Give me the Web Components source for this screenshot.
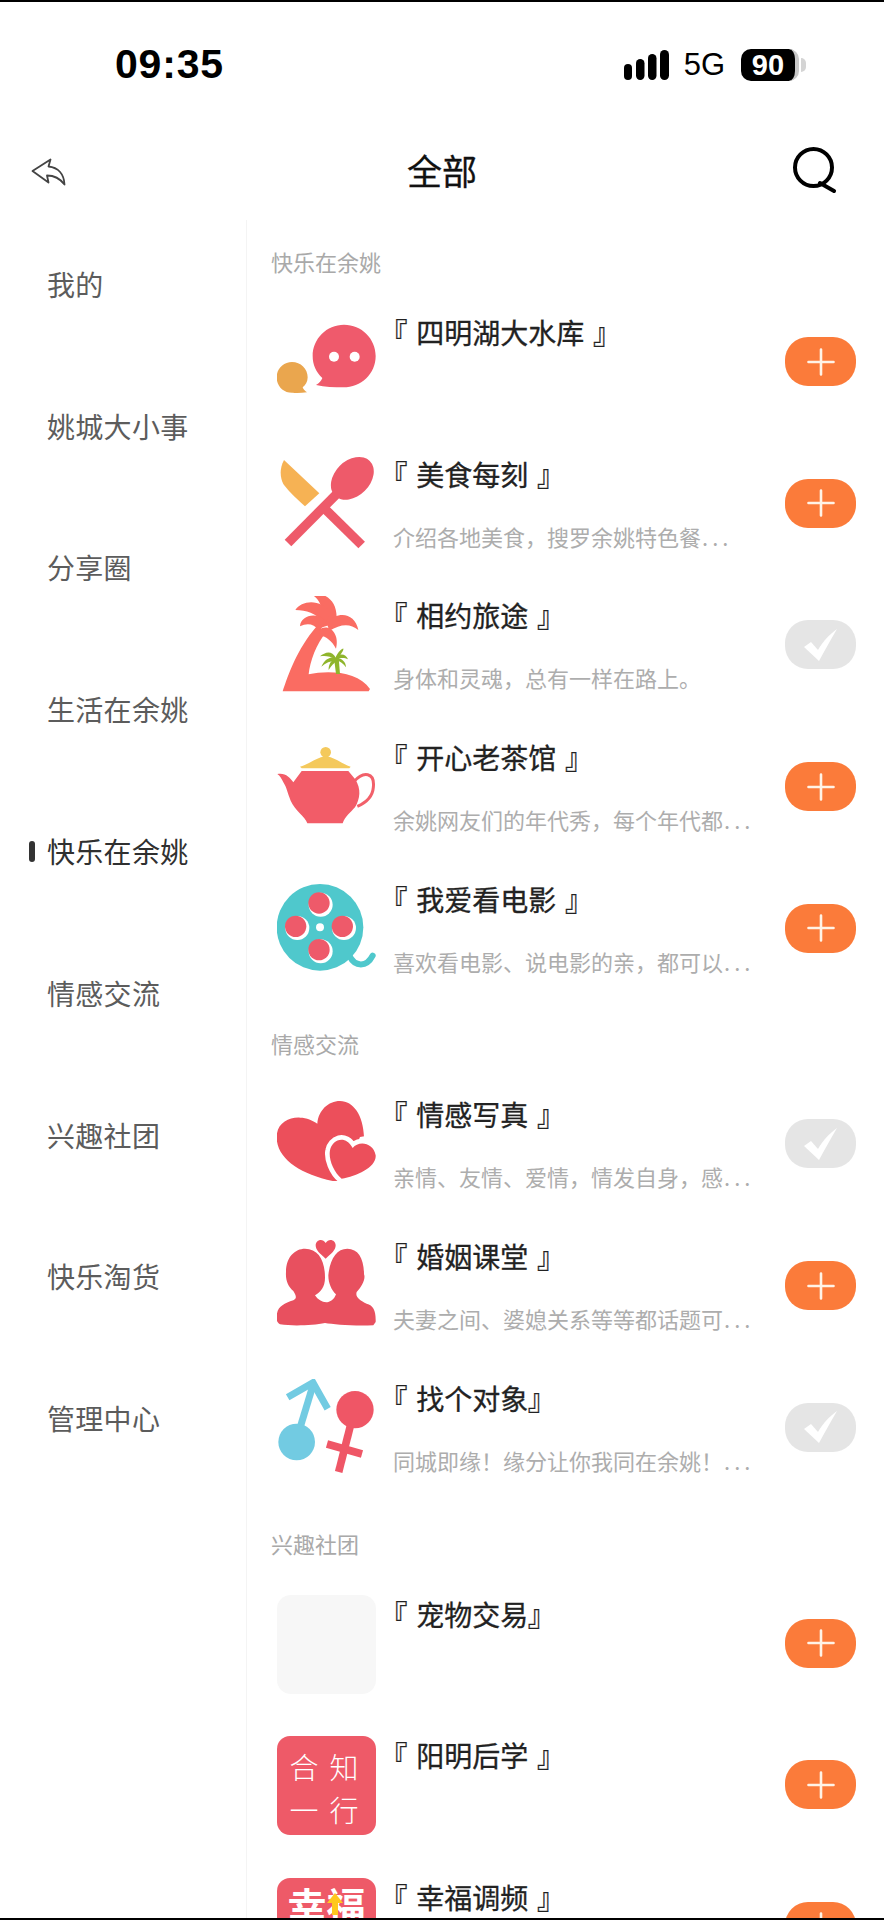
<!DOCTYPE html>
<html lang="zh">
<head>
<meta charset="utf-8">
<title>全部</title>
<style>
  html,body{margin:0;padding:0;background:#fff;}
  body{font-family:"Noto Sans CJK SC","Liberation Sans",sans-serif;}
  .dots{letter-spacing:4px;margin-left:1px;}
</style>
</head>
<body>
<app-shell>
  <status-bar slot="status"></status-bar>
  <top-nav slot="nav">全部</top-nav>
  <side-menu slot="side">
    <menu-item>我的</menu-item>
    <menu-item>姚城大小事</menu-item>
    <menu-item>分享圈</menu-item>
    <menu-item>生活在余姚</menu-item>
    <menu-item active>快乐在余姚</menu-item>
    <menu-item>情感交流</menu-item>
    <menu-item>兴趣社团</menu-item>
    <menu-item>快乐淘货</menu-item>
    <menu-item>管理中心</menu-item>
  </side-menu>

  <forum-section heading="快乐在余姚">
    <forum-row>
      <forum-icon slot="icon" kind="chat"></forum-icon>
      <span slot="title">『 四明湖大水库 』</span>
    </forum-row>
    <forum-row>
      <forum-icon slot="icon" kind="food"></forum-icon>
      <span slot="title">『 美食每刻 』</span>
      <span slot="desc">介绍各地美食，搜罗余姚特色餐<span class="dots">...</span></span>
    </forum-row>
    <forum-row joined>
      <forum-icon slot="icon" kind="palm"></forum-icon>
      <span slot="title">『 相约旅途 』</span>
      <span slot="desc">身体和灵魂，总有一样在路上。</span>
    </forum-row>
    <forum-row>
      <forum-icon slot="icon" kind="teapot"></forum-icon>
      <span slot="title">『 开心老茶馆 』</span>
      <span slot="desc">余姚网友们的年代秀，每个年代都<span class="dots">...</span></span>
    </forum-row>
    <forum-row>
      <forum-icon slot="icon" kind="film"></forum-icon>
      <span slot="title">『 我爱看电影 』</span>
      <span slot="desc">喜欢看电影、说电影的亲，都可以<span class="dots">...</span></span>
    </forum-row>
  </forum-section>

  <forum-section heading="情感交流">
    <forum-row joined>
      <forum-icon slot="icon" kind="hearts"></forum-icon>
      <span slot="title">『 情感写真 』</span>
      <span slot="desc">亲情、友情、爱情，情发自身，感<span class="dots">...</span></span>
    </forum-row>
    <forum-row>
      <forum-icon slot="icon" kind="couple"></forum-icon>
      <span slot="title">『 婚姻课堂 』</span>
      <span slot="desc">夫妻之间、婆媳关系等等都话题可<span class="dots">...</span></span>
    </forum-row>
    <forum-row joined>
      <forum-icon slot="icon" kind="gender"></forum-icon>
      <span slot="title">『 找个对象』</span>
      <span slot="desc">同城即缘！缘分让你我同在余姚！<span class="dots">...</span></span>
    </forum-row>
  </forum-section>

  <forum-section heading="兴趣社团">
    <forum-row>
      <forum-icon slot="icon" kind="blank"></forum-icon>
      <span slot="title">『 宠物交易』</span>
    </forum-row>
    <forum-row>
      <forum-icon slot="icon" kind="seal"></forum-icon>
      <span slot="title">『 阳明后学 』</span>
    </forum-row>
    <forum-row>
      <forum-icon slot="icon" kind="luck"></forum-icon>
      <span slot="title">『 幸福调频 』</span>
    </forum-row>
  </forum-section>
</app-shell>

<script>
class AppShell extends HTMLElement {
  constructor(){
    super();
    this.attachShadow({mode:"open"});
    this.shadowRoot.innerHTML = `
      <style>
        :host{display:flex;flex-direction:column;height:1920px;overflow:hidden;background:#fff;}
        .edge{flex:none;height:2px;background:#000;}
        .body{flex:1;min-height:0;display:grid;grid-template-columns:246px 1fr;overflow:hidden;}
        .list{border-left:1px solid #f4f4f4;padding:19px 0 0 24px;overflow:hidden;}
      </style>
      <div class="edge"></div>
      <slot name="status"></slot>
      <slot name="nav"></slot>
      <div class="body">
        <slot name="side"></slot>
        <div class="list"><slot></slot></div>
      </div>
      <div class="edge"></div>
    `;
  }
}

class StatusBar extends HTMLElement {
  constructor(){
    super();
    this.attachShadow({mode:"open"});
    this.shadowRoot.innerHTML = `
      <style>
        :host{display:flex;flex:none;height:126px;align-items:center;justify-content:space-between;
          padding:0 78px 0 115px;font-family:"Liberation Sans",sans-serif;color:#000;}
        .time{font-size:41px;font-weight:700;letter-spacing:.8px;margin-top:-1px;}
        .right{display:flex;align-items:center;}
        .net{font-size:31px;margin:0 16px 0 15px;}
        .bars{display:block;}
        .batt{display:flex;align-items:center;}
        .cell{width:58px;height:32px;border-radius:10px;box-sizing:border-box;border-right:4px solid #c9c9c9;
          background:#000;color:#fff;font-size:29px;font-weight:700;display:flex;align-items:center;justify-content:center;}
        .tip{width:5px;height:14px;margin-left:2px;background:#d4d4d4;border-radius:0 5px 5px 0;}
      </style>
      <span class="time">09:35</span>
      <div class="right">
        <svg class="bars" width="45" height="30" viewBox="0 0 45 30" fill="#000">
          <rect x="0" y="14" width="8" height="16" rx="4"/>
          <rect x="12" y="9" width="8.5" height="21" rx="4.2"/>
          <rect x="24" y="4" width="8.5" height="26" rx="4.2"/>
          <rect x="36" y="0" width="9" height="30" rx="4.5"/>
        </svg>
        <span class="net">5G</span>
        <div class="batt"><div class="cell">90</div><div class="tip"></div></div>
      </div>
    `;
  }
}

class TopNav extends HTMLElement {
  constructor(){
    super();
    this.attachShadow({mode:"open"});
    this.shadowRoot.innerHTML = `
      <style>
        :host{display:grid;flex:none;height:92px;grid-template-columns:1fr auto 1fr;align-items:center;padding:0 31px;}
        .title{font-size:35px;color:#111;margin-top:-9px;-webkit-text-stroke:.3px #111;}
        .back{justify-self:start;display:block;margin-top:-4px;}
        .search{justify-self:end;display:block;margin:-8px 16px 0 0;}
      </style>
      <svg class="back" width="35" height="28" viewBox="0 0 35 28" fill="none" stroke="#444" stroke-width="1.8" stroke-linejoin="round">
        <path d="M1.5 13 L19.5 1.5 L17.5 8.5 C27 9.5 33 16 33.5 26.5 C29 20.5 24 17.5 16 17.5 L17.5 24.5 Z"/>
      </svg>
      <div class="title"><slot></slot></div>
      <svg class="search" width="44" height="46" viewBox="0 0 44 46" fill="none" stroke="#000" stroke-width="4" stroke-linecap="round">
        <circle cx="20.5" cy="20.5" r="18.5"/>
        <path d="M27 36 L41 44"/>
      </svg>
    `;
  }
}

class SideMenu extends HTMLElement {
  constructor(){
    super();
    this.attachShadow({mode:"open"});
    this.shadowRoot.innerHTML = `
      <style>
        :host{display:block;margin-top:-7px;}
      </style>
      <slot></slot>
    `;
  }
}

class MenuItem extends HTMLElement {
  constructor(){
    super();
    this.attachShadow({mode:"open"});
    this.shadowRoot.innerHTML = `
      <style>
        :host{display:flex;height:141.8px;align-items:center;padding-left:47px;position:relative;
          font-size:28px;letter-spacing:.3px;color:#5c5c5c;}
        :host([active]){color:#303030;}
        .mark{display:none;position:absolute;left:29px;top:61px;width:6px;height:21px;border-radius:3px;background:#333;}
        :host([active]) .mark{display:block;}
      </style>
      <span class="mark"></span>
      <slot></slot>
    `;
  }
}

class ForumSection extends HTMLElement {
  constructor(){
    super();
    this.attachShadow({mode:"open"});
    this.shadowRoot.innerHTML = `
      <style>
        :host{display:block;}
        h2{margin:0 0 30px;height:44px;line-height:44px;font-size:22px;font-weight:400;color:#a9a9a9;}
      </style>
      <h2>${this.getAttribute("heading")}</h2>
      <slot></slot>
    `;
  }
}

class ForumRow extends HTMLElement {
  constructor(){
    super();
    this.attachShadow({mode:"open"});
    const joined = this.hasAttribute("joined");
    this.shadowRoot.innerHTML = `
      <style>
        :host{display:grid;height:141.7px;grid-template-columns:99px 1fr 71px;column-gap:17px;padding:0 28px 0 6px;align-items:start;}
        .text{min-width:0;white-space:nowrap;}
        .name{height:40px;line-height:40px;margin-top:-1px;font-size:28px;color:#222;font-feature-settings:"palt";word-spacing:3px;-webkit-text-stroke:.3px #222;}
        .desc{height:40px;line-height:40px;margin-top:22px;font-size:22px;color:#adadad;}
        .btn{width:71px;height:49px;margin-top:24px;border-radius:23px;display:flex;align-items:center;justify-content:center;background:#fb7b3a;}
        .btn.on{background:#e5e5e5;}
        svg{display:block;}
      </style>
      <slot name="icon"></slot>
      <div class="text">
        <div class="name"><slot name="title"></slot></div>
        <div class="desc"><slot name="desc"></slot></div>
      </div>
      <div class="btn ${joined ? "on" : ""}">${joined
        ? `<svg width="36" height="34" viewBox="0 0 36 34" fill="#fff"><path d="M1 19 L8 14 L15 22 C20 13 27 6 34 1 C28 11 22 22 16 33 Z"/></svg>`
        : `<svg width="28" height="28" viewBox="0 0 28 28" stroke="#fff3e6" stroke-width="2.6" stroke-linecap="round"><path d="M14 1.5V26.5M1.5 14H26.5"/></svg>`}</div>
    `;
  }
}

// coordinates of the drawings are read off the 3x crops, hence the odd viewBoxes
const ICONS = {
  chat: `<svg viewBox="51 45 297 297">
      <path fill="#ef5a6c" d="M252 80 C305 80 347 122 347 174 C347 228 303 268 250 268 C222 268 195 268 168 261 C178 256 184 248 187 240 C168 222 158 200 158 174 C158 122 200 80 252 80Z"/>
      <circle cx="222" cy="176" r="15" fill="#fff"/><circle cx="284" cy="176" r="15" fill="#fff"/>
      <path fill="#eaa64e" d="M96 192 C122 192 143 212 143 238 C143 252 136 262 128 268 C130 274 135 279 141 283 C125 285 105 285 96 284 C70 284 50 264 50 238 C50 212 70 192 96 192Z"/></svg>`,
  food: `<svg viewBox="51 468 297 297">
      <path fill="#f6b254" d="M72 483 L178 583 L135 622 C105 595 80 570 70 555 C60 535 58 510 72 483Z"/>
      <path fill="none" stroke="#ee5a6a" stroke-width="28" d="M195 630 L305 738"/>
      <path fill="none" stroke="#ee5a6a" stroke-width="28" d="M245 570 L84 732"/>
      <ellipse cx="277" cy="538" rx="74" ry="53" transform="rotate(-45 277 538)" fill="#ee5a6a"/></svg>`,
  palm: `<svg viewBox="51 54 297 297">
      <g fill="#fa6c62">
        <path d="M68 340 C85 290 110 215 170 145 L200 160 C168 200 150 250 146 289 C205 276 295 280 330 333 L326 340Z"/>
        <path d="M180 150 C195 110 188 68 153 48 C205 40 238 80 228 135Z"/>
        <path d="M195 135 C165 105 140 96 106 96 C125 65 185 62 212 105Z"/>
        <path d="M178 158 C160 135 140 135 120 145 C122 112 170 100 200 130Z"/>
        <path d="M200 135 C235 96 285 106 295 156 C270 135 242 138 208 158Z"/>
        <path d="M185 150 C218 140 238 176 228 212 C216 190 200 176 178 172Z"/>
      </g>
      <g fill="#8fb52c">
        <path d="M222 240 L236 240 L240 288 L228 288Z"/>
        <path d="M228 240 C215 215 195 222 180 235 C195 232 210 234 228 245Z"/>
        <path d="M228 240 C215 235 195 240 184 266 C196 254 212 248 228 248Z"/>
        <path d="M226 242 C215 245 205 258 206 276 C214 262 222 254 232 248Z"/>
        <path d="M226 240 C235 218 250 210 250 212 C252 216 240 232 232 244Z"/>
        <path d="M228 238 C240 225 258 228 264 244 C252 238 240 240 232 244Z"/>
        <path d="M230 240 C245 240 258 252 258 268 C250 256 240 250 230 246Z"/>
      </g></svg>`,
  teapot: `<svg viewBox="51 477 297 297">
      <circle cx="197" cy="520" r="16" fill="#f4c95c"/>
      <path fill="#f4c95c" d="M120 563 C150 555 170 535 197 532 C225 535 245 555 272 563 L268 568 L125 568Z"/>
      <path fill="none" stroke="#f2606a" stroke-width="9" d="M282 608 C310 575 345 580 340 625 C338 650 320 670 292 682"/>
      <path fill="#f25c68" d="M125 576 H265 L285 600 C305 630 300 660 285 685 C272 700 255 712 248 733 H142 C135 712 105 695 92 665 C82 640 80 625 70 610 C65 600 60 590 52 585 C75 580 90 595 100 610Z"/></svg>`,
  film: `<svg viewBox="51 903 297 297">
      <path fill="none" stroke="#4fc8cc" stroke-width="18" stroke-linecap="round" d="M268 1130 C285 1165 320 1165 338 1130"/>
      <circle cx="180" cy="1045" r="130" fill="#4fc8cc"/>
      <g fill="#fff"><circle cx="182" cy="977" r="36"/><circle cx="112" cy="1047" r="36"/><circle cx="252" cy="1047" r="36"/><circle cx="182" cy="1117" r="36"/><circle cx="180" cy="1045" r="12"/></g>
      <g fill="#ee5a6a"><circle cx="177" cy="972" r="32"/><circle cx="107" cy="1042" r="32"/><circle cx="247" cy="1042" r="32"/><circle cx="177" cy="1112" r="32"/></g></svg>`,
  hearts: `<svg viewBox="51 24 297 297">
      <path fill="#ec4f5b" d="M218 282 C120 260 50 215 50 150 C50 110 85 90 120 92 C140 92 158 100 172 110 C175 70 205 42 240 42 C280 42 310 85 312 150 L312 282Z"/>
      <path fill="#fff" stroke="#fff" stroke-width="28" d="M245 275 C220 255 205 215 210 190 C215 160 255 140 278 183 C295 160 340 165 347 205 C350 240 290 268 245 275Z"/>
      <path fill="#fff" d="M300 150 L360 140 L360 300 L218 300 L250 265Z"/>
      <path fill="#ec4f5b" d="M245 275 C220 255 205 215 210 190 C215 160 255 140 278 183 C295 160 340 165 347 205 C350 240 290 268 245 275Z"/></svg>`,
  couple: `<svg viewBox="51 450 297 297">
      <path fill="#ec5060" d="M197 515 C180 500 167 490 167 475 C167 458 188 452 197 468 C206 452 227 458 227 475 C227 490 214 500 197 515Z"/>
      <path fill="#e8505f" d="M50 690 C50 660 70 650 100 640 C112 635 108 625 100 612 C85 600 76 580 78 555 C78 510 105 485 135 485 C175 485 195 520 195 572 C195 600 182 615 165 625 C175 640 190 648 205 645 C220 640 225 630 228 622 C215 610 205 590 205 565 C210 515 230 485 262 485 C295 485 312 515 312 562 C318 575 305 600 290 615 C285 630 300 640 320 650 C340 655 348 670 347 705 L340 715 C280 718 220 712 195 708 C160 715 100 718 60 712 C50 705 50 700 50 690Z"/></svg>`,
  gender: `<svg viewBox="51 873 297 297">
      <g fill="none" stroke="#72cbe2" stroke-width="21"><path d="M120 1020 L158 895"/><path d="M83 928 L159 884 L203 962"/></g>
      <circle cx="110" cy="1062" r="55" fill="#72cbe2"/>
      <g fill="none" stroke="#ef5666" stroke-width="23"><path d="M272 1010 L236 1152"/><path d="M201 1068 L306 1098"/></g>
      <circle cx="285" cy="965" r="56" fill="#ef5666"/></svg>`,
};

class ForumIcon extends HTMLElement {
  constructor(){
    super();
    this.attachShadow({mode:"open"});
    const kind = this.getAttribute("kind");
    let inner = ICONS[kind] || "";
    if (kind === "seal") inner = `<div class="seal"><span>合</span><span>知</span><span>一</span><span>行</span></div>`;
    if (kind === "luck") inner = `<div class="luck"><span>幸</span><span>福</span><i></i></div>`;
    if (kind === "blank") inner = `<div class="blank"></div>`;
    this.shadowRoot.innerHTML = `
      <style>
        :host{display:block;width:99px;height:99px;}
        svg{display:block;width:99px;height:99px;}
        .blank{width:99px;height:99px;border-radius:14px;background:#f7f7f7;}
        .seal{width:99px;height:99px;box-sizing:border-box;border-radius:13px;background:#ee5a68;color:#fff;
          display:grid;grid-template-columns:40px 40px;grid-template-rows:43px 43px;place-items:center;padding:9px 0 0 7px;
          font-size:29px;line-height:1;font-weight:300;}
        .seal span{display:block;}
        .luck{width:99px;height:99px;box-sizing:border-box;border-radius:13px;background:#ee5a68;color:#fff;padding-top:7px;
          display:flex;justify-content:center;font-size:39px;line-height:1;font-weight:700;position:relative;}
        .luck i{position:absolute;left:50px;top:15px;width:0;height:0;border:8px solid transparent;border-top:0;border-bottom:10px solid #ffc81e;}
        .luck i::after{content:"";position:absolute;left:-3px;top:10px;width:6px;height:12px;background:#ffc81e;}
      </style>
      ${inner}
    `;
  }
}

customElements.define("app-shell", AppShell);
customElements.define("status-bar", StatusBar);
customElements.define("top-nav", TopNav);
customElements.define("side-menu", SideMenu);
customElements.define("menu-item", MenuItem);
customElements.define("forum-section", ForumSection);
customElements.define("forum-row", ForumRow);
customElements.define("forum-icon", ForumIcon);
</script>
</body>
</html>
